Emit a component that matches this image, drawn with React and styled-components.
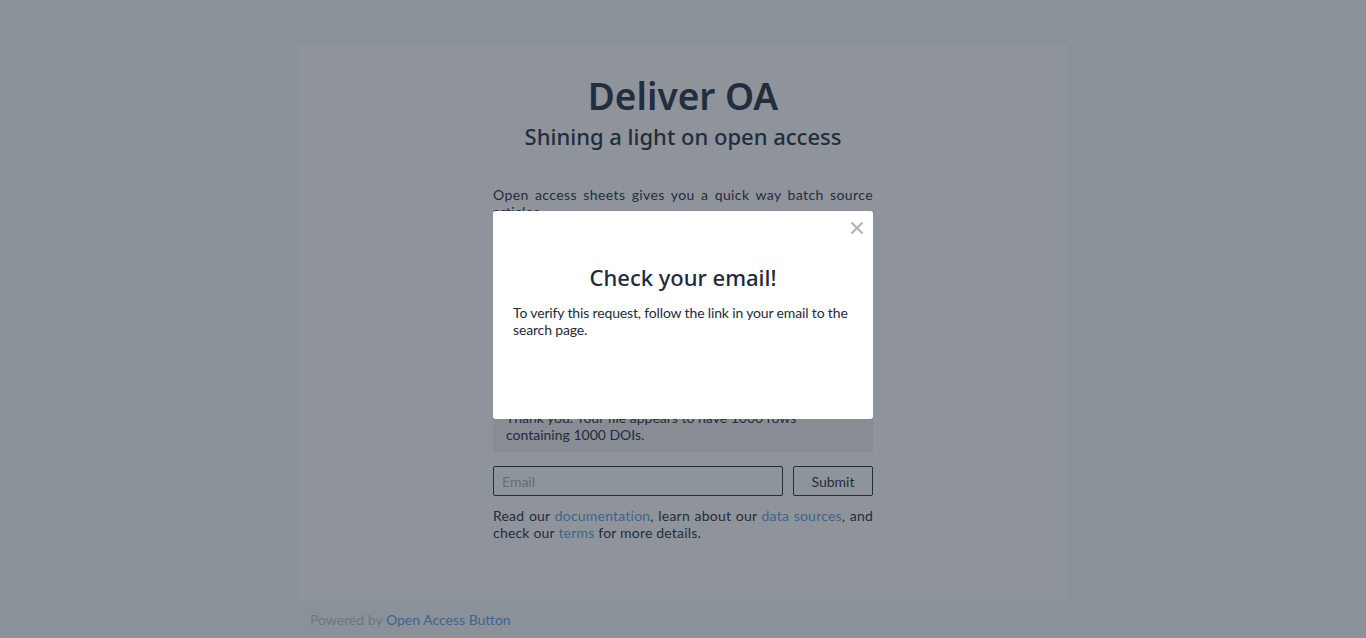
import React, { useState } from 'react';
import styled, { createGlobalStyle } from 'styled-components';

const GlobalStyle = createGlobalStyle`
    html, body {
        margin: 0;
        padding: 0;
        background: #f6f8fa;
        color: #243047;
        font-family: Lato, "Open Sans", sans-serif;
    }
`;

function App() {
    const [email, setEmail] = useState("");
    const [open, setOpen] = useState(true);

    return (
        <Page>
            <GlobalStyle />
            <Card>
                <Column>
                    <Title>Deliver OA</Title>
                    <Subtitle>Shining a light on open access</Subtitle>
                    <Intro>
                        Open access sheets gives you a quick way batch source articles.
                    </Intro>
                    <Hidden>
                        Upload a CSV file with a column of DOIs and we will email you
                        a sheet with links to free, legal copies.
                    </Hidden>
                    <Notice>
                        Thank you. Your file appears to have 1000 rows containing 1000 DOIs.
                    </Notice>
                    <Form onSubmit={(e) => e.preventDefault()}>
                        <EmailInput
                            type="email"
                            placeholder="Email"
                            value={email}
                            onChange={(e) => setEmail(e.target.value)}
                        />
                        <SubmitButton type="submit">Submit</SubmitButton>
                    </Form>
                    <Fine>
                        Read our <A href="#">documentation</A>, learn about our <A href="#">data sources</A>, and
                        check our <A href="#">terms</A> for more details.
                    </Fine>
                </Column>
            </Card>
            <Footer>
                Powered by <A href="#">Open Access Button</A>
            </Footer>

            {open && (
                <Overlay>
                    <Modal>
                        <Close onClick={() => setOpen(false)} aria-label="Close">
                            <svg width="14" height="14" viewBox="0 0 14 14">
                                <path d="M1.5 1.5 L12.5 12.5 M12.5 1.5 L1.5 12.5" stroke="#b3b3b3" strokeWidth="2" />
                            </svg>
                        </Close>
                        <ModalTitle>Check your email!</ModalTitle>
                        <ModalText>
                            To verify this request, follow the link in your email to the search page.
                        </ModalText>
                    </Modal>
                </Overlay>
            )}
        </Page>
    )
}

const Page = styled.div`
    min-height: 638px;
    padding-top: 44px;
    box-sizing: border-box;
`;

const Card = styled.div`
    width: 768px;
    min-height: 557px;
    margin: 0 auto;
    background: #ffffff;
    box-sizing: border-box;
    padding-top: 29px;
    display: flex;
    justify-content: center;
`;

const Column = styled.div`
    width: 380px;
    display: flex;
    flex-direction: column;
`;

const Title = styled.h1`
    margin: 0;
    text-align: center;
    font-family: "Noto Sans", sans-serif;
    font-weight: 600;
    font-size: 37px;
    line-height: 46px;
`;

const Subtitle = styled.h2`
    margin: 0;
    text-align: center;
    font-family: "Noto Sans", sans-serif;
    font-weight: 500;
    font-size: 22px;
    line-height: 34px;
`;

const Intro = styled.p`
    margin: 33px 0 0 0;
    font-size: 14px;
    line-height: 17px;
    text-align: justify;
    letter-spacing: 0.4px;
`;

const Hidden = styled.p`
    margin: 20px 0 0 0;
    height: 167px;
    font-size: 14px;
    line-height: 17px;
`;

const Notice = styled.div`
    background: #f0f1f3;
    padding: 2px 70px 9px 13px;
    font-size: 14px;
    line-height: 17px;
`;

const Form = styled.form`
    display: flex;
    gap: 10px;
    margin-top: 14px;
`;

const EmailInput = styled.input`
    flex: 1;
    height: 30px;
    box-sizing: border-box;
    border: 1px solid #243047;
    border-radius: 2px;
    background: transparent;
    padding: 0 8px;
    font-family: Lato, sans-serif;
    font-size: 14px;
    color: #243047;
    &::placeholder {
        color: #aab0ba;
    }
`;

const SubmitButton = styled.button`
    width: 80px;
    height: 30px;
    box-sizing: border-box;
    border: 1px solid #243047;
    border-radius: 2px;
    background: transparent;
    font-family: Lato, sans-serif;
    font-size: 14px;
    color: #243047;
    cursor: pointer;
`;

const Fine = styled.p`
    margin: 11px 0 0 0;
    font-size: 14px;
    line-height: 17px;
    text-align: justify;
    letter-spacing: 0.2px;
`;

const A = styled.a`
    color: #5aa0ea;
    text-decoration: none;
`;

const Footer = styled.div`
    width: 768px;
    margin: 10px auto 0;
    box-sizing: border-box;
    padding-left: 11px;
    font-size: 14px;
    line-height: 17px;
    color: #bdc1ca;
`;

const Overlay = styled.div`
    position: fixed;
    inset: 0;
    background: rgba(31, 41, 54, 0.5);
`;

const Modal = styled.div`
    position: absolute;
    left: 493px;
    top: 211px;
    width: 380px;
    height: 208px;
    box-sizing: border-box;
    background: #ffffff;
    border-radius: 3px;
    padding: 52px 20px 0 20px;
`;

const Close = styled.button`
    position: absolute;
    top: 10px;
    right: 9px;
    border: none;
    background: none;
    padding: 0;
    width: 14px;
    height: 14px;
    display: flex;
    cursor: pointer;
`;

const ModalTitle = styled.h3`
    margin: 0;
    text-align: center;
    font-family: "Noto Sans", sans-serif;
    font-weight: 500;
    font-size: 22px;
    line-height: 28px;
    color: #1f2a3c;
`;

const ModalText = styled.p`
    margin: 13px 0 0 0;
    font-size: 14px;
    line-height: 17px;
    letter-spacing: -0.15px;
    color: #1f2a3c;
`;

export default App;
